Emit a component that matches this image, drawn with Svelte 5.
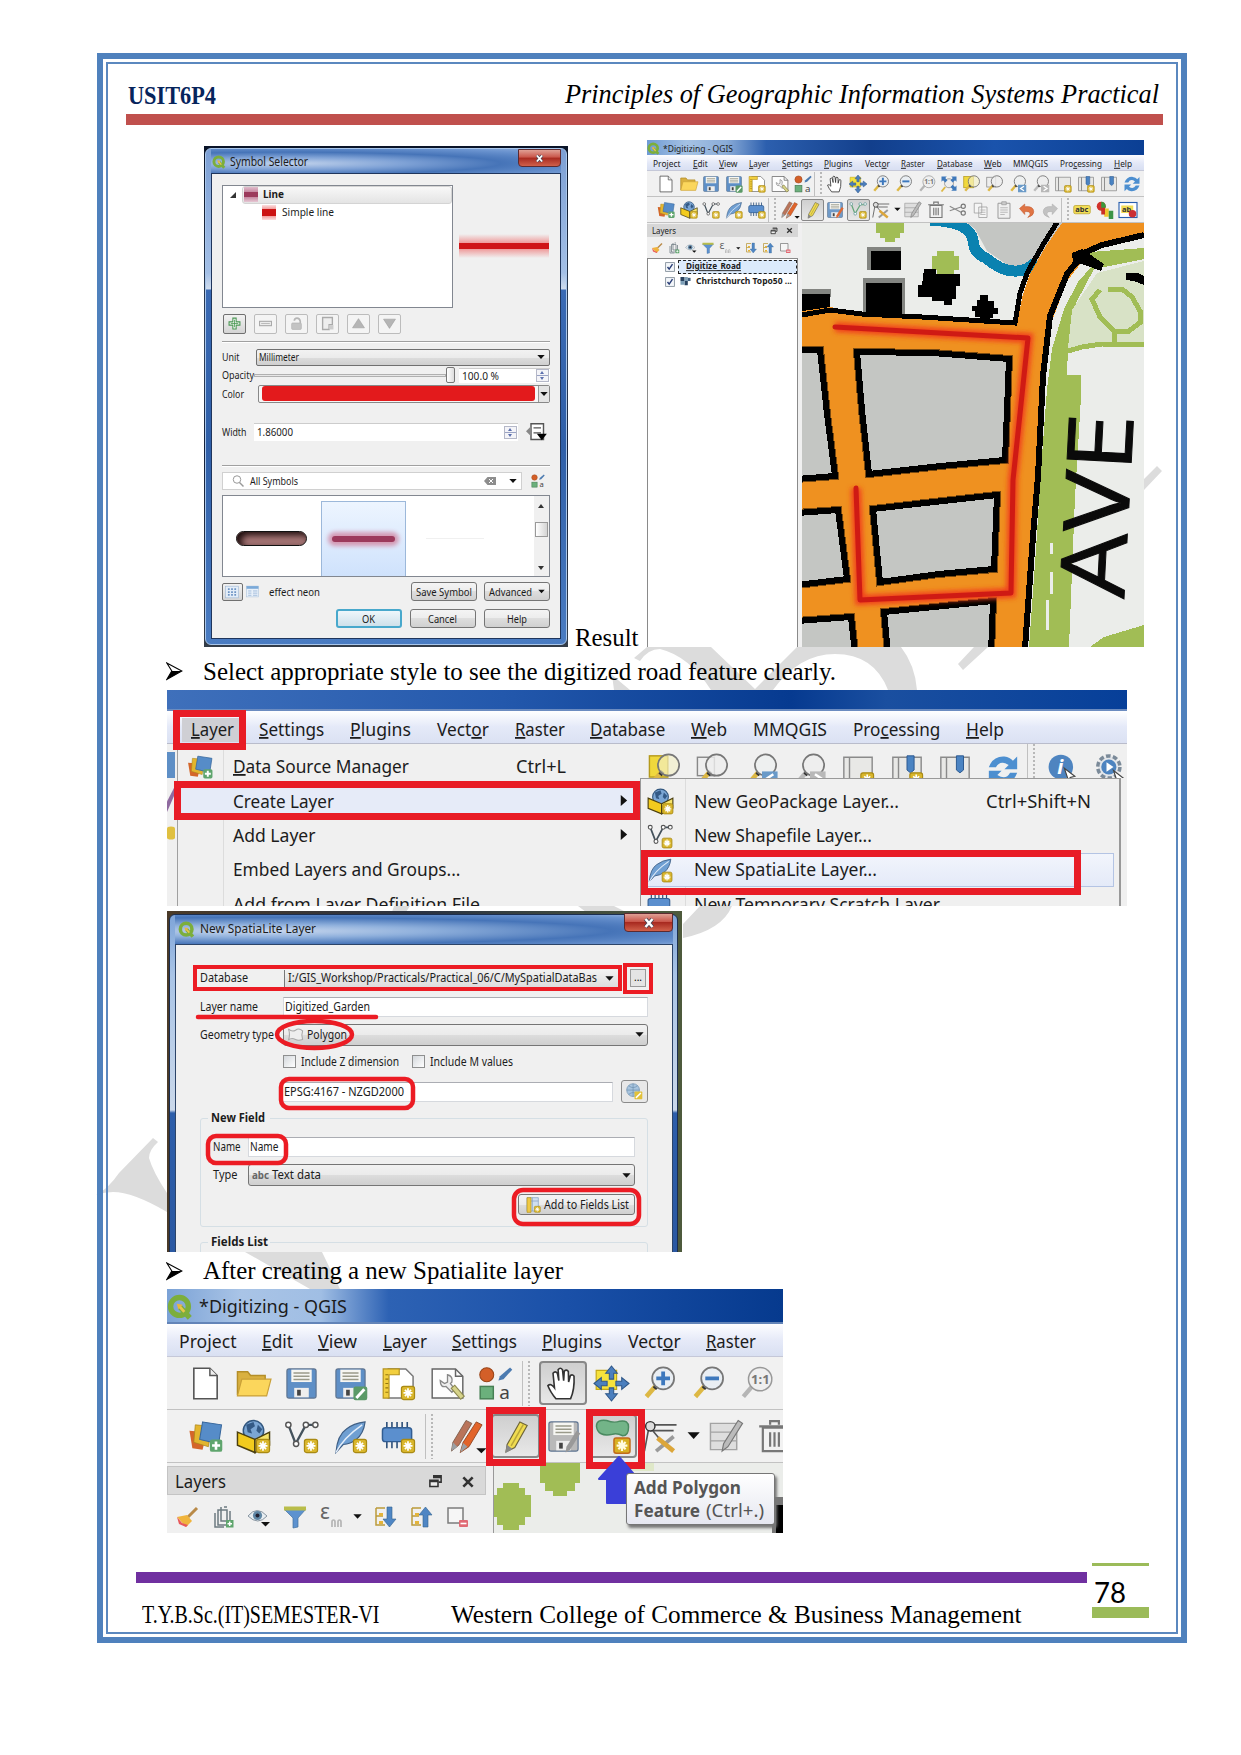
<script>
  const star = '<rect x="14" y="14" width="9" height="9" rx="1.5" fill="#d9b62c" stroke="#a98a14" stroke-width=".8"/><path d="M18.5 15.2v6.6M15.4 18.5h6.2M16.4 16.4l4.2 4.2M20.6 16.4l-4.2 4.2" stroke="#fff" stroke-width="1.2"/>';
  const lens = (f, c) => `<path d="M9 14l-6 7" stroke="${c}" stroke-width="3.2"/><path d="M10.5 13.2l-2 2.3" stroke="#333" stroke-width="3"/><circle cx="14.5" cy="8.5" r="7.5" fill="${f}" stroke="#777" stroke-width="1.2"/>`;
  const sheet = '<path d="M2 3h4v18h-4zM6 3h16v18h-16z" fill="#e8e8e6" stroke="#8a8a8a"/>';
  const floppy = (c) => `<path d="M2 3.5q0-1.5 1.5-1.5h17q1.5 0 1.5 1.5v17q0 1.5-1.5 1.5h-17q-1.5 0-1.5-1.5z" fill="${c}" stroke="#5c7390" stroke-width=".8"/><rect x="5" y="2.5" width="14" height="8.5" fill="#f6f6f2"/><path d="M6.5 4.8h11M6.5 7h11M6.5 9.2h11" stroke="#9a9a8a"/><rect x="7" y="15" width="10" height="6.5" fill="#eee"/><rect x="9" y="16.3" width="2.5" height="4" fill="#444"/>`;
  const icons = {
    q: '<circle cx="11.5" cy="11.5" r="8.2" fill="none" stroke="#7cae3c" stroke-width="5"/><path d="M12 12l9 10" stroke="#7cae3c" stroke-width="5"/><path d="M9 9l5.5 1-4 4z" fill="#eeb63a"/><path d="M12 12l4 4.5" stroke="#e8c54a" stroke-width="2.5"/>',
    new: '<path d="M4 1.5h11l5 5v16h-16z" fill="#fff" stroke="#555" stroke-width="1.1"/><path d="M15 1.5v5h5" fill="#eee" stroke="#555"/>',
    open: '<path d="M1 20v-16h7l2 2.5h10v4" fill="#d9b040" stroke="#b48e28"/><path d="M1 20.5l3-11.5h20l-3 11.5z" fill="#fbd65c" stroke="#c9a038" stroke-width=".8"/>',
    save: floppy('#5e8fc6'),
    saveas: floppy('#5e8fc6') + '<rect x="14" y="14" width="9.5" height="9.5" rx="1.5" fill="#5b9a67"/><path d="M16 22l5.5-6" stroke="#fff" stroke-width="2"/>',
    layout: '<path d="M5 2h12l5 5v15h-17z" fill="#fff" stroke="#777"/><path d="M1.5 2h11v4h-7v16h-4z" fill="#f2cf3e" stroke="#b4921c" stroke-width=".8"/><path d="M3 6h2M3 9h2M3 12h2M3 15h2M3 18h2" stroke="#94750c" stroke-width=".8"/>' + star,
    wrench: '<path d="M1.5 2h16l5 5v15h-21z" fill="#fdfdfd" stroke="#666"/><path d="M17.5 2v5h5" stroke="#666"/><path d="M12 6q4 1 3 5l-1 1 3 4-2 2-4-4q-4 1-4-4l3 2 2-1v-2z" fill="#eee" stroke="#888" stroke-width=".9"/><path d="M15.500 14l7 8" stroke="#8c8850" stroke-width="4"/><path d="M16 14.500l6 7" stroke="#d6d38a" stroke-width="2.500"/>',
    style: '<circle cx="6" cy="6" r="4.8" fill="#d35f28" stroke="#9a4417" stroke-width=".7"/><path d="M14 10l1-3 7-6 1.5 1.5-6 6.5z" fill="#4c7bb0"/><rect x="1.5" y="14" width="9" height="8.5" fill="#6bb07c" stroke="#477f54"/><text x="14.5" y="22.5" font-size="13" fill="#444">a</text>',
    hand: '<path d="M7.5 22.5q-4-5-5.5-9 2-2 4.5 1.5l-1-10q1.5-2 3 0l1 5-.5-7.5q1.5-2 3 0l.8 7.5.4-6.5q1.6-1.5 2.8.3l.2 7.2 1.2-4.5q1.6-1 2.5.5.5 9-2.4 15.5z" fill="#fff" stroke="#333" stroke-width="1.1"/>',
    pan: '<path d="M1.5 3h14v13h-14z" fill="#f6e23c" stroke="#c5a916" stroke-width=".8"/><path d="M12 0l4 5h-2.5v4h-3v-4h-2.5zM12 24l4-5h-2.5v-4h-3v4h-2.5zM0 12l5-4v2.5h4v3h-4v2.5zM24 12l-5-4v2.5h-4v3h4v2.5z" fill="#4b7fbe" stroke="#2f5788" stroke-width=".7"/>',
    zin: lens('#e9eef3', '#ddb844') + '<path d="M14.5 3.8v9.4M9.8 8.5h9.4" stroke="#3d78bd" stroke-width="2.6"/>',
    zout: lens('#e9eef3', '#ddb844') + '<path d="M9.8 8.5h9.4" stroke="#3d78bd" stroke-width="2.6"/>',
    z11: '<path d="M9 14l-6 7" stroke="#b5b5b5" stroke-width="3"/><circle cx="14.5" cy="9" r="8" fill="#efefef" stroke="#999"/><text x="8.3" y="12.5" font-size="9" font-weight="700" fill="#777">1:1</text>',
    zfull: '<path d="M7 16l-5 6" stroke="#ddb844" stroke-width="2.5"/><circle cx="12" cy="11" r="6" fill="#eee" stroke="#888"/><path d="M2 2h7l-2 2 3 3-3 3-3-3-2 2zM22 2h-7l2 2-3 3 3 3 3-3 2 2zM22 21v-7l-2 2-3-3-3 3 3 3-2 2z" fill="#3f79bb"/>',
    zsel: '<rect x="1" y="2" width="13" height="15" fill="#f0d83c" stroke="#b59a1c"/>' + lens('#f3f0c8aa', '#ddb844'),
    zlay: '<rect x="1" y="3" width="12" height="13" fill="#eee" stroke="#888"/>' + lens('#eeeeeecc', '#ddb844'),
    zlast: lens('#eef0f0', '#ddb844') + '<rect x="12" y="13" width="11" height="10" fill="#6a9ac8"/><path d="M20 15l-4.5 3 4.5 3" stroke="#fff" stroke-width="1.8" fill="none"/>',
    znext: lens('#eeeeee', '#bbb') + '<rect x="12" y="13" width="11" height="10" fill="#b8b8b8"/><path d="M15.5 15l4.5 3-4.5 3" stroke="#fff" stroke-width="1.8" fill="none"/>',
    nmap: sheet + star,
    nbook: sheet + '<path d="M12 2h5v10l-2.5 2-2.5-2z" fill="#4a83c2" stroke="#2d5a91" stroke-width=".7"/>' + star,
    book: sheet + '<path d="M13 2h5v10l-2.5 2-2.5-2z" fill="#4a83c2" stroke="#2d5a91" stroke-width=".7"/>',
    refresh: '<path d="M2 10q3-8 11-7.5 4 .5 6 3l3-3v9h-9l3-3q-6-4-9 1.5zM22 14q-3 8-11 7.5-4-.5-6-3l-3 3v-9h9l-3 3q6 4 9-1.5z" fill="#4d8fd0"/>',
    dsm: '<path d="M1 8l12 1-3 12-7-1z" fill="#d4662a"/><path d="M5 4l11 1-2 14-10-3z" fill="#e3b52e" stroke="#a9841b" stroke-width=".5"/><path d="M10 2l13 2-2 13-13-3z" fill="#568cc8" stroke="#38679c" stroke-width=".7"/><rect x="15" y="14" width="8.5" height="8.5" rx="1.5" fill="#5fa56d"/><path d="M19.2 15.5v5.5M16.5 18.2h5.5" stroke="#fff" stroke-width="1.8"/>',
    gpkg: '<circle cx="12" cy="8" r="7" fill="#7ba6d4" stroke="#32577f"/><path d="M7 4l5-2 1 3-3 2 1 3-3-1zM15 4l3 3-2 3-2-2z" fill="#345a86"/><path d="M1 9l12 5v9l-12-5z" fill="#f2cb1e" stroke="#4c4010"/><path d="M13 14l10-5v9l-10 5z" fill="#f7e46a" stroke="#4c4010"/>' + star,
    shp: '<path d="M3 4l5 13 7-13h6" fill="none" stroke="#44525c" stroke-width="1.6"/><g fill="#fff" stroke="#555"><circle cx="3" cy="4" r="1.8"/><circle cx="8.3" cy="17" r="1.8"/><circle cx="15" cy="4" r="1.8"/><circle cx="21.5" cy="4" r="1.8"/></g>' + star,
    lite: '<path d="M2 23q1-12 7-16 5-4 13-5-1 8-6 12-4 3-9 3.500z" fill="#6f9fd2" stroke="#3f5f85" stroke-width=".8"/><path d="M2 23q5-10 18-19" stroke="#e4eefa" stroke-width="1" fill="none"/>' + star,
    mem: '<path d="M4 2v18M7.5 2v18M11 2v18M14.500 2v18M18 2v18" stroke="#2e5079" stroke-width="1.1"/><rect x="1" y="6" width="20" height="9.5" rx="2" fill="#5b8fce" stroke="#315d92"/>' + star,
    pencils: '<path d="M11 1l4 2-9 15-5 4 1-6z" fill="#b9745a" stroke="#7b5a48" stroke-width=".6"/><path d="M18 2l4 2-9 15-6 4 2-7z" fill="#e2642a" stroke="#8f4420" stroke-width=".6"/><path d="M2 16l-1 6 4-3zM9 16.5l-2 6.5 5-4z" fill="#9ba0a4"/><path d="M18 20h7l-3.500 3.500z" fill="#111"/>',
    pencil: '<path d="M15 2l5 2.500-8.500 15-6 3 .8-5z" fill="#f0dc50" stroke="#6d6438" stroke-width=".8"/><path d="M17.500 3.500l-8.500 15" stroke="#b9a63a"/><path d="M6 17.500l-1 6 5-3z" fill="#888"/>',
    saveed: floppy('#6f9ac8') + '<path d="M21 8l2.5 2-7 11-3 2 .5-4z" fill="#de6a35"/>',
    savegr: floppy('#b9b9b9') + '<path d="M21 8l2.5 2-7 11-3 2 .5-4z" fill="#999"/>',
    line: '<path d="M3 4l5 13 7-12h6" fill="none" stroke="#62a578" stroke-width="1.6"/><g fill="#fff" stroke="#699"><circle cx="3" cy="4" r="1.8"/><circle cx="8.3" cy="17" r="1.8"/><circle cx="15" cy="4" r="1.8"/><circle cx="21.5" cy="4" r="1.8"/></g>' + star,
    poly: '<path d="M1 5q0-5 7-4 5 2 9 .5 6-1 6 4 0 6-4 6-4-2-7-1-10 2-11-5.500z" fill="#73b488" stroke="#4a8a60"/><rect x="13" y="13" width="11" height="10.5" rx="1.5" fill="#d8b022" stroke="#c06a1a"/><path d="M18.5 14.5v7.500M14.8 18.2h7.400M16 15.8l5 5M21 15.8l-5 5" stroke="#fffbe0" stroke-width="1.5"/>',
    vert: '<path d="M1 22l3-16M5 4h18M5 8h16M5 6l10 12" fill="none" stroke="#555" stroke-width="1.1"/><circle cx="5" cy="5" r="3.2" fill="#ddd" stroke="#333"/><path d="M9 22l12-10" stroke="#9a9a9a" stroke-width="2.6"/><path d="M10 13l11 9" stroke="#dca63a" stroke-width="3.2"/>',
    multi: '<path d="M1 3h18v18h-18zM1 9h18M1 15h18" fill="#dedede" stroke="#a3a3a3"/><path d="M20 1l3 2-10 16-4 3 1-5z" fill="#bbb" stroke="#777" stroke-width=".8"/>',
    trash: '<path d="M4 6h16v16h-16z" fill="#f2f2f2" stroke="#777" stroke-width="1.5"/><path d="M1.5 5h21M9 4v-2.500h6v2.500M9 9v10M12 9v10M15 9v10" stroke="#777" stroke-width="1.5" fill="none"/>',
    cut: '<path d="M1 7l15 8M1 13l15-5" stroke="#8a8a8a" stroke-width="1.4"/><g fill="none" stroke="#777" stroke-width="1.5"><circle cx="19" cy="7" r="2.8"/><circle cx="19" cy="16" r="2.8"/></g>',
    copy: '<path d="M3 3h10v13h-10zM9 8h11v14h-11z" fill="#f5f5f5" stroke="#999"/><path d="M11 12h7M11 15h7M11 18h7" stroke="#aaa"/>',
    paste: '<path d="M4 3h16v20h-16z" fill="#f0f0f0" stroke="#999" stroke-width="1.3"/><path d="M9 1h6v4h-6z" fill="#ccc" stroke="#999"/><path d="M7 9h10M7 12h10M7 15h10M7 18h6" stroke="#aaa"/>',
    undo: '<path d="M2 10l7-6v3.500q12-1 12 7 0 5-8 7.500 4-4 3-6-1-2.500-7-2v4z" fill="#e07444" stroke="#c0562a" stroke-width=".7"/>',
    redo: '<path d="M22 10l-7-6v3.500q-12-1-12 7 0 5 8 7.500-4-4-3-6 1-2.500 7-2v4z" fill="#c2c2c2" stroke="#aaa" stroke-width=".7"/>',
    abc: '<rect x="1" y="6" width="22" height="11" rx="2" fill="#f2dd55" stroke="#baa32e"/><text x="3" y="15" font-size="10" font-weight="700" fill="#333">abc</text>',
    dia: '<circle cx="7" cy="7" r="6" fill="#d2322c"/><path d="M7 1a6 6 0 010 12z" fill="#3a9a3c"/><rect x="11" y="10" width="6" height="11" fill="#f0c62e"/><rect x="7" y="9" width="5" height="9" fill="#cc2f24"/><rect x="17" y="13" width="6" height="11" fill="#3c9446"/>',
    abp: '<rect x="0" y="2" width="24" height="20" fill="#fff" stroke="#2a5fae" stroke-width="1.5"/><rect x="3" y="6" width="16" height="10" fill="#f2dd55"/><text x="4" y="14.5" font-size="10" font-weight="700" fill="#333">ab</text><circle cx="18" cy="17" r="5" fill="#cc2f34"/>',
    broom: '<path d="M22 3l-9 9" stroke="#b98a48" stroke-width="3"/><path d="M2 12l10-2 5 6-6 6z" fill="#f0b43c"/><path d="M2 12l5 6 6 2-2 2-7-3z" fill="#e8585a"/>',
    group: '<path d="M7 5h9v15h-9zM4 8v14h9M10 2v14h9v-10M13 2h3" fill="none" stroke="#6c7a80" stroke-width="1.5"/><rect x="15" y="15" width="7.5" height="7.5" fill="#5fa56d"/><path d="M18.7 16.5v4.500M16.5 18.7h4.500" stroke="#fff" stroke-width="1.5"/>',
    eye: '<path d="M1 11q9-11 19 0-9 10-19 0z" fill="#e8eef2" stroke="#8794a0"/><circle cx="10.5" cy="10.5" r="4.6" fill="#5f86a4"/><circle cx="10.5" cy="10.5" r="2" fill="#223"/><path d="M14 17h9l-4.5 4.500z" fill="#111"/>',
    filter: '<path d="M1 4h22l-8 9v9l-5 1v-10z" fill="#5d92cf" stroke="#42719f" stroke-width=".7"/><path d="M1 1.5h22v4h-22z" fill="#b9bd4a"/>',
    eps: '<text x="1" y="14" font-size="21" fill="#666">ε</text><path d="M13 22v-5q0-2 1.500-2t1.500 2v5M19 22v-5q0-2 1.500-2t1.500 2v5" fill="none" stroke="#b5b5b5" stroke-width="1.7"/>',
    exp: '<path d="M3 3h9M3 3v17h9M3 11h7" stroke="#bb9a3a" stroke-width="1.5" fill="none"/><path d="M6 8h4v3h-4zM6 16h4v3h-4z" fill="#e4b43a"/><path d="M14 2h5v12h4l-6.5 8-6.5-8h4z" fill="#4f86c4" stroke="#32628f" stroke-width=".6"/>',
    col: '<path d="M3 3h9M3 3v17h9M3 11h7" stroke="#bb9a3a" stroke-width="1.5" fill="none"/><path d="M6 8h4v3h-4zM6 16h4v3h-4z" fill="#e4b43a"/><path d="M14 22h5v-12h4l-6.5-8-6.5 8h4z" fill="#4f86c4" stroke="#32628f" stroke-width=".6"/>',
    rem: '<path d="M3 3h15v15h-15z" fill="#f6f6f6" stroke="#7c7c7c" stroke-width="1.5"/><rect x="14" y="15" width="9" height="7" rx="1" fill="#e06a74"/><path d="M15.5 18.5h6" stroke="#fff" stroke-width="1.6"/>',
    info: '<circle cx="11" cy="12" r="10.5" fill="#4e84c0"/><text x="8" y="18" font-size="17" font-weight="700" font-style="italic" fill="#fff">i</text><path d="M14 13l9 7-4 1-1 4z" fill="#fff" stroke="#444"/>',
    gear: '<circle cx="11" cy="12" r="9.5" fill="#e3e6ea" stroke="#7b8a99" stroke-width="3" stroke-dasharray="4 2"/><circle cx="11" cy="12" r="6.5" fill="#4e84c0"/><path d="M9 8l6 4-6 4z" fill="#fff"/><path d="M15 15l9 7-4 1-1 4z" fill="#fff" stroke="#444"/>',
    float: '<path d="M8 3h13v10h-4M8 5.5h13" fill="none" stroke="#333" stroke-width="2.5"/><path d="M3 10h13v10h-13zM3 12h13" fill="#eee" stroke="#333" stroke-width="2.5"/>',
    x: '<path d="M4 4l16 16M20 4l-16 16" stroke="#333" stroke-width="4.5"/>',
    xw: '<path d="M5 4l14 16M19 4l-14 16" stroke="#445" stroke-width="8"/><path d="M5 4l14 16M19 4l-14 16" stroke="#fff" stroke-width="5"/>',
    down: '<path d="M1 6h22l-11 12z" fill="#111"/>',
    right: '<path d="M6 0l14 12-14 12z" fill="#111"/>',
    plus: '<path d="M9 2h6v7h7v6h-7v7h-6v-7h-7v-6h7z" fill="#fff" stroke="#4a9653" stroke-width="2"/><path d="M12 5v14M5 12h14" stroke="#4a9653" stroke-width="1.5"/>',
    minus: '<rect x="1" y="8" width="22" height="8" fill="#eee" stroke="#aaa" stroke-width="2"/><path d="M4 12h16" stroke="#bbb" stroke-width="2"/>',
    lock: '<rect x="3" y="11" width="18" height="12" rx="2" fill="#c3c3c3" stroke="#aaa"/><path d="M8 7q0-5 5-5t6 6v3" fill="none" stroke="#b5b5b5" stroke-width="3"/>',
    dup: '<path d="M3 1h18v13h-6v9h-12z" fill="#eee" stroke="#aaa" stroke-width="2.5"/><rect x="15" y="15" width="8" height="8" fill="#ccc"/>',
    up: '<path d="M12 3l11 17h-22z" fill="#b5b5b5" stroke="#999"/>',
    dn: '<path d="M12 21l11-17h-22z" fill="#b5b5b5" stroke="#999"/>',
    mag: '<circle cx="10" cy="9" r="7.5" fill="none" stroke="#999" stroke-width="2"/><path d="M15 15l8 8" stroke="#999" stroke-width="3"/>',
    clear: '<path d="M0 12l7-8h17v16h-17z" fill="#8d8d8d"/><path d="M10 8l8 8M18 8l-8 8" stroke="#fff" stroke-width="2"/>',
    grid: '<rect x="1" y="2" width="22" height="20" fill="#e3edf8" stroke="#9db6d4"/><path d="M5 7h14M5 12h14M5 17h14" stroke="#6e94c4" stroke-width="3" stroke-dasharray="3 2.5"/>',
    table: '<rect x="1" y="2" width="22" height="20" fill="#e8f0f9" stroke="#a9c0da"/><path d="M1 4.5h22" stroke="#7ba9d8" stroke-width="5"/><path d="M4 11h6M13 11h8M4 15h6M13 15h8M4 19h6M13 19h8" stroke="#96b4d6" stroke-width="1.5"/>',
    over: '<path d="M6 2h15v19h-15zM9 7h9M9 13h9" fill="#fff" stroke="#555" stroke-width="1.7"/><path d="M6 5l-6 6 6 6z" fill="#888"/><path d="M13 14h12l-6 8z" fill="#000"/>',
    globe: '<circle cx="10" cy="10" r="9" fill="#a8c4de" stroke="#6f90b0"/><path d="M1 10h18M10 1v18M4 4q6 5 12 0M4 16q6-5 12 0" stroke="#6f90b0" fill="none"/><rect x="12" y="12" width="11" height="11" rx="1" fill="#e2c13a"/><path d="M14 21l7-7" stroke="#fff" stroke-width="2"/>',
    shape: '<path d="M2 4q5 5 10 2 5-4 10 1-2 5 0 12-6 2-10 0-6-3-10 1 3-8 0-16z" fill="#eee" stroke="#aaa" stroke-width="1.5"/>',
    field: '<path d="M3 1h17v20h-17z" fill="#cfdff0" stroke="#7f9cc0"/><path d="M3 6h17M11 1v20" stroke="#7f9cc0"/><path d="M3 1h6v22h-6z" fill="#efc945" stroke="#b4921c"/>' + star,
    check: '<rect x="1.5" y="1.5" width="21" height="21" fill="#f4f7fa" stroke="#7e8a96" stroke-width="2"/><path d="M6 12l4 5 8-12" fill="none" stroke="#2b3f77" stroke-width="3.5"/>',
    raster: '<path d="M1 2h9v9h-9zM10 11h7v9h-7z" fill="#27415f"/><path d="M10 2h7v9h-7zM1 11h9v8h-9z" fill="#7ea0b8"/><path d="M17 4h6v7h-6z" fill="#3f6080"/>'
  };

  const menu = ['Project', '~Edit', '~View', '~Layer', '~Settings', '~Plugins', 'Vect~or', '~Raster', '~Database', '~Web', 'MMQGIS', 'Pro~cessing', '~Help'];
  const menuB = [27.5, 14.7, 18.5, 20.7, 30.7, 28.4, 25, 23.7, 35.4, 17.7, 35, 42, 18];
  const menuC = [43, 65.3, 61, 52, 50, 75.3, 36, 74, 87.3, 38];
  const menuE = [57.5, 31, 39, 44, 65, 60, 52.7, 50];

  const tb1 = ['new', 'open', 'save', 'saveas', 'layout', 'wrench', 'style', '|', 'hand', 'pan', 'zin', 'zout', 'z11', 'zfull', 'zsel', 'zlay', 'zlast', 'znext', 'nmap', 'nbook', 'book', 'refresh'];
  const tb2 = ['dsm', 'gpkg', 'shp', 'lite', 'mem', '|', 'pencils', '!pencil', 'saveed', '!line', 'vert', '▾', 'multi', 'trash', 'cut', 'copy', 'paste', 'undo', 'redo', '|', 'abc', 'dia', 'abp'];
  const tb3 = ['new', 'open', 'save', 'saveas', 'layout', 'wrench', 'style', '|', '!hand', 'pan', 'zin', 'zout', 'z11'];
  const tb4 = ['dsm', 'gpkg', 'shp', 'lite', 'mem', '|', 'pencils', '!pencil', 'savegr', '!poly', 'vert', '▾', 'multi', 'trash'];
  const tbL = ['broom', 'group', 'eye', 'filter', 'eps', '▾', 'exp', 'col', 'rem'];
  const strip = ['zsel', 'zlay', 'zlast', 'znext', 'nmap', 'nbook', 'book', 'refresh'];
</script>

{#snippet t(s, w, fs, cls = '')}
  <svg class="t {cls}" width={w} height={Math.round(fs * 1.36)}><text x="0" y={fs} font-size={fs} textLength={w} lengthAdjust="spacingAndGlyphs">{#each s.split('~') as part, i}{#if i === 0}{part}{:else}<tspan class="mn">{part[0]}</tspan>{part.slice(1)}{/if}{/each}</text></svg>
{/snippet}

{#snippet icon(name, size)}
  <svg class="ic" width={size} height={size} viewBox="0 0 24 24" fill="none">{@html icons[name]}</svg>
{/snippet}

{#snippet toolbar(items, size)}
  {#each items as it}
    {#if it === '|'}
      <span class="sep"></span>
    {:else if it === '▾'}
      <span class="drop">{@render icon('down', size * 0.38)}</span>
    {:else if it[0] === '!'}
      <span class="cell on">{@render icon(it.slice(1), size)}</span>
    {:else}
      <span class="cell">{@render icon(it, size)}</span>
    {/if}
  {/each}
{/snippet}

{#snippet bullet()}
  <svg class="bullet" width="17" height="19" viewBox="0 0 17 19"><path d="M.8 1l15 8-15 8.5 5-8.5z" fill="#fff" stroke="#000" stroke-width="1.1" /><path d="M5.8 9h10l-15 8.5z" /></svg>
{/snippet}

<div class="page">
  <svg class="wm" width="1241" height="1755">
    <path d="M96 1195q12-6 23-22l34-35 5 4q-9 8-9 16 4 14 18 35v19q-34-20-54-20-8 0-17 3zM245 1252h77l18 37h-30z" />
    <path d="M634 658l13-11h64l44 42 42-42h104q14 18 16 43h-29q-14-36-53-36-36 0-62 36h-62q-22-34-51-41-12 0-20 12zM612 675l18 15h-16zM958 664l5 6 25-23h-14zM1144 479l13-13 5 5-18 19zM700 906h32q-10 24-49 32v-14zM394 906h16l-4 6h-14zM578 906h36l12 6h-40z" />
  </svg>
  <div class="frame">
    <div class="inner">
      <header>
        {@render t('USIT6P4', 88, 25, 'code')}
        {@render t('Principles of Geographic Information Systems Practical', 594, 27, 'ital')}
      </header>

      <div class="pair">
        <section class="symsel">
          <div class="glass">
            <div class="title">{@render icon('q', 14)}{@render t('Symbol Selector', 78, 12)}<span class="close">{@render icon('xw', 9)}</span></div>
            <div class="client">
              <div class="top">
                <div class="tree">
                  <div class="r1"><svg width="6" height="6"><path d="M6 0v6h-6z" fill="#333" /></svg><div class="sel"><i class="sw plum"></i>{@render t('Line', 21, 11, 'b')}</div></div>
                  <div class="r2"><i class="sw red"></i>{@render t('Simple line', 52, 10.5)}</div>
                </div>
                <div class="prev"></div>
              </div>
              <div class="btns">
                {#each ['plus', 'minus', 'lock', 'dup', 'up', 'dn'] as b, i}
                  <span class="sb" class:live={i === 0}>{@render icon(b, 13)}</span>
                {/each}
              </div>
              <hr />
              <div class="f unit">{@render t('Unit', 17.5, 10.5)}<div class="combo">{@render t('Millimeter', 40, 10.5)}{@render icon('down', 8)}</div></div>
              <div class="f opac">{@render t('Opacity', 32, 10.5)}<i class="track"></i><i class="knob"></i><div class="spin">{@render t('100.0 %', 37, 10.5)}<i class="ud"></i></div></div>
              <div class="f colr">{@render t('Color', 22, 10.5)}<div class="cbox"><i></i><b>{@render icon('down', 8)}</b></div></div>
              <div class="f wid">{@render t('Width', 24.5, 10.5)}<div class="spin">{@render t('1.86000', 36, 10.5)}<i class="ud"></i></div>{@render icon('over', 20)}</div>
              <hr class="h2" />
              <div class="f srch"><div class="sbox">{@render icon('mag', 12)}{@render t('All Symbols', 48, 10.5)}<em></em>{@render icon('clear', 12)}<em class="g"></em>{@render icon('down', 8)}</div>{@render icon('style', 14)}</div>
              <div class="gallery">
                <div class="cellg first"><i class="pill"></i></div>
                <div class="cellg pick"><i class="neon"></i></div>
                <div class="cellg wide"><i class="faint"></i></div>
                <div class="sbar"><svg width="6" height="4"><path d="M0 4l3-4 3 4z" fill="#333" /></svg><i></i><svg width="6" height="4"><path d="M0 0l3 4 3-4z" fill="#333" /></svg></div>
              </div>
              <div class="f foot"><span class="sb live">{@render icon('grid', 14)}</span>{@render icon('table', 13)}{@render t('effect neon', 51, 10.5)}<em></em><span class="bt">{@render t('Save Symbol', 56, 10.5)}</span><span class="bt">{@render t('Advanced', 43, 10.5)}{@render icon('down', 7)}</span></div>
              <div class="f acts"><span class="bt ok">{@render t('OK', 13, 10.5)}</span><span class="bt">{@render t('Cancel', 29, 10.5)}</span><span class="bt">{@render t('Help', 20, 10.5)}</span></div>
            </div>
          </div>
        </section>

        <div class="result">{@render t('Result', 63.5, 24.8, 'serif')}</div>

        <section class="qgis">
          <div class="bar">{@render icon('q', 13)}{@render t('*Digitizing - QGIS', 70, 9.8)}</div>
          <nav>{#each menu as m, i}{@render t(m, menuB[i], 9.8)}{/each}</nav>
          <div class="tb">{@render toolbar(tb1, 18)}</div>
          <div class="tb two">{@render toolbar(tb2, 18)}</div>
          <div class="work">
            <div class="panel">
              <div class="ph">{@render t('Layers', 24, 9.8)}<em></em>{@render icon('float', 8)}{@render icon('x', 7)}</div>
              <div class="pt">{@render toolbar(tbL, 12)}</div>
              <div class="layers">
                <div class="lr">{@render icon('check', 10)}<div class="pickrow">{@render t('Digitize_Road', 55, 9.2, 'b und')}</div></div>
                <div class="lr second">{@render icon('check', 10)}{@render icon('raster', 11)}{@render t('Christchurch Topo50 ...', 96, 9.2, 'b')}</div>
              </div>
            </div>
            <svg class="map" width="342" height="424" viewBox="0 0 342 424">
              <defs><filter id="glow" x="-20%" y="-20%" width="140%" height="140%"><feGaussianBlur stdDeviation="2.5" /></filter></defs>
              <rect width="342" height="424" fill="#ebedea" />
              <path d="M165 0h100l-28 46-20 4-32-22-12-22z" fill="#c4c6c3" />
              <g shape-rendering="crispEdges">
                <path d="M128-3q40 2 43 20 1 14 13 18 16 14 31 13 10 0 20-10" fill="none" stroke="#0a82b0" stroke-width="11" />
                <path d="M74 0h28v10h-4v5h-5v4h-10v-4h-5v-5h-4zM135 28h17v5h5v14h-5v6h-17v-6h-5v-14h5z" fill="#a1bd55" />
                <path d="M65 24h34v23h-34zM61 55h42v36h-42zM0 66h29v8h-29z" fill="#838581" />
                <path d="M69 28h30v19h-30zM64 60h36v34h-36zM0 71h28v20h-28zM122 46h12v5h24v12h-4v13h-4v6h-8v-4h-12v-4h-14v-12h4zM178 72h8v6h6v7h4v6h-5v4h-3v8h-10v-9h-5v-6h-3v-5h5v-6h3z" fill="#000" />
                <path d="M0 88l28-4 30 6 60 3 97 8 5-26 8-24 16-28 16-23h82v12l-52 14-25 32-15 40-8 60-5 80-5 80-8 106h-224z" fill="#ef9120" />
                <path d="M0 92l28-5 32 4 60 3 93 6 5-30 8-22 16-28 14-22" fill="none" stroke="#000" stroke-width="5" />
                <path d="M342 25l-54 4 2 14-14 16-14 27-12 40-5 40-6 80-5 80-7 98h40l6-150 6-100v-22h-14l1-28 8-44 18-34 50-10z" fill="#a1bd55" />
                <path d="M342 12l-42 10-18 8-17 21-17 42-7 60-5 100-5 60-8 112" fill="none" stroke="#000" stroke-width="6" />
                <path d="M295 50l47-12v84l-76 3 4-38z" fill="#d8e2c6" />
                <path d="M266 128l14-4 20-3 42 1M312 120v-12h15l13-10M312 108l-14-14-8-18 8-9M306 66h14l10 8 8 14v12" fill="none" stroke="#a1bd55" stroke-width="5" />
                <path d="M270 30l10-4 22 15-3 7-16-6-12-3zM324 50h12l6 3v9l-10-4-8-1z" />
                <path d="M249 320v11M249 349v22M245 377v30" stroke="#ebedea" stroke-width="3" />
                <path d="M288 424l14-10 40-12v22z" fill="#a1bd55" />
                <g fill="#c4c6c3" stroke="#7a4a10" stroke-width="8">
                  <path d="M55 129l76 1 76 6-4 101-64 6-72 8-7-64z" />
                  <path d="M-5 127h23l7 64 8 62-38 3z" />
                  <path d="M71 286l52-6 72-8-3 74-55 5-59 8z" />
                  <path d="M-5 290l41-3 9 69-50 6z" />
                  <path d="M82 389l50-5 59-6-2 52h-103z" />
                  <path d="M-5 398l54-4 4 36h-58z" />
                </g>
                <g fill="#c4c6c3" stroke="#000" stroke-width="6">
                  <path d="M55 129l76 1 76 6-4 101-64 6-72 8-7-64z" />
                  <path d="M-5 127h23l7 64 8 62-38 3z" />
                  <path d="M71 286l52-6 72-8-3 74-55 5-59 8z" />
                  <path d="M-5 290l41-3 9 69-50 6z" />
                  <path d="M82 389l50-5 59-6-2 52h-103z" />
                  <path d="M-5 398l54-4 4 36h-58z" />
                </g>
              </g>
              <text x="0" y="0" class="ave" transform="translate(322 376) rotate(-87)" textLength="184" lengthAdjust="spacingAndGlyphs" font-size="90">AVE</text>
              <path d="M33 104l193 11-15 142-2 113-151 7-4-112" fill="none" stroke="#f0401c" stroke-width="10" filter="url(#glow)" />
              <path d="M33 104l193 11-15 142-2 113-151 7-4-112" fill="none" stroke="#cf1a14" stroke-width="5" stroke-linecap="round" stroke-linejoin="round" />
            </svg>
          </div>
        </section>
      </div>

      <div class="item">{@render bullet()}{@render t('Select appropriate style to see the digitized road feature clearly.', 633, 24.8, 'serif')}</div>

      <section class="menus">
        <div class="blue"></div>
        <nav>{#each menu.slice(3) as m, i}<span class="mi" class:hot={i === 0}>{@render t(m, menuC[i], 18)}</span>{/each}</nav>
        <div class="below">
          <div class="edge"><i class="e1"></i><i class="e2"></i><i class="e3"></i></div>
          <div class="dropm">
            <div class="mr"><span class="mic">{@render icon('dsm', 26)}</span>{@render t('~Data Source Manager', 176, 18)}<span class="key">{@render t('Ctrl+L', 50, 18)}</span></div>
            <div class="mr cre"><span class="mic"></span>{@render t('Create Layer', 101, 18)}<span class="arr">{@render icon('right', 11)}</span></div>
            <div class="mr"><span class="mic"></span>{@render t('Add Layer', 82.5, 18)}<span class="arr">{@render icon('right', 11)}</span></div>
            <div class="mr"><span class="mic"></span>{@render t('Embed Layers and Groups...', 227.5, 18)}</div>
            <div class="mr"><span class="mic"></span>{@render t('Add from Layer Definition File', 247, 18)}</div>
            <div class="mark m2"></div>
          </div>
          <div class="rest">
            <div class="stb">{#each strip as s}<span class="c2">{@render icon(s, 34)}</span>{/each}<span class="sep"></span><span class="c2">{@render icon('info', 28)}</span><span class="c2">{@render icon('gear', 28)}</span></div>
            <div class="subm">
              <div class="mr"><span class="mic">{@render icon('gpkg', 27)}</span>{@render t('New GeoPackage Layer...', 205, 18)}<span class="key">{@render t('Ctrl+Shift+N', 105, 18)}</span></div>
              <div class="mr"><span class="mic">{@render icon('shp', 26)}</span>{@render t('New Shapefile Layer...', 178, 18)}</div>
              <div class="mr hov"><span class="mic">{@render icon('lite', 26)}</span>{@render t('New SpatiaLite Layer...', 183, 18)}</div>
              <div class="mr"><span class="mic">{@render icon('mem', 26)}</span>{@render t('New Temporary Scratch Layer', 246, 18)}</div>
              <div class="mark m3"></div>
            </div>
          </div>
        </div>
        <div class="mark m1"></div>
      </section>

      <section class="dlg">
        <div class="glass2">
          <div class="title">{@render icon('q', 17)}{@render t('New SpatiaLite Layer', 116, 13)}<span class="close">{@render icon('xw', 12)}</span></div>
          <div class="body">
            <div class="g db"><div class="red sq">{@render t('Database', 48, 12)}<div class="cb">{@render t('I:/GIS_Workshop/Practicals/Practical_06/C/MySpatialDataBas', 309, 12)}{@render icon('down', 9)}</div></div><div class="red sq dots"><b>...</b></div></div>
            <div class="g ln"><span class="lab">{@render t('Layer name', 58, 12)}</span><div class="in">{@render t('Digitized_Garden', 85, 12)}</div></div>
            <div class="g gt"><span class="lab">{@render t('Geometry type', 74, 12)}</span><div class="cmb">{@render icon('shape', 17)}{@render t('Polygon', 40, 12)}<em></em>{@render icon('down', 9)}</div></div>
            <div class="g ck"><i class="box"></i>{@render t('Include Z dimension', 98, 12)}<i class="box b2"></i>{@render t('Include M values', 83, 12)}</div>
            <div class="g ep"><div class="in">{@render t('EPSG:4167 - NZGD2000', 120, 12)}</div><span class="gb">{@render icon('globe', 17)}</span></div>
            <div class="grp">
              <div class="cap">{@render t('New Field', 54, 12, 'b')}</div>
              <div class="g nm"><span class="lab2">{@render t('Name', 27.5, 12)}</span><div class="in">{@render t('Name', 28.5, 12)}</div></div>
              <div class="g ty"><span class="lab2">{@render t('Type', 24.5, 12)}</span><div class="cmb">{@render t('abc', 17, 11, 'b dim')}{@render t('Text data', 49, 12)}<em></em>{@render icon('down', 9)}</div></div>
              <div class="add"><span class="bt">{@render icon('field', 16)}{@render t('Add to Fields List', 85, 12)}</span></div>
            </div>
            <div class="grp g2"><div class="cap">{@render t('Fields List', 57, 12, 'b')}</div></div>
          </div>
        </div>
        <svg class="ann" width="515" height="341" viewBox="0 0 515 341">
          <g fill="none" stroke="#ec1c24" stroke-width="4.5">
            <path d="M31 106h178" stroke-linecap="round" />
            <ellipse cx="147.5" cy="123.5" rx="37.5" ry="13.5" />
            <rect x="114" y="168" width="132" height="29" rx="8" />
            <rect x="41" y="225" width="78" height="27" rx="8" />
            <rect x="347" y="279" width="125" height="34" rx="9" />
          </g>
        </svg>
      </section>

      <div class="item last">{@render bullet()}{@render t('After creating a new Spatialite layer', 360, 24.8, 'serif')}</div>

      <section class="dig">
        <div class="bar">{@render icon('q', 26)}{@render t('*Digitizing - QGIS', 148, 18)}</div>
        <nav>{#each menuE as w, i}{@render t(menu[i], w, 18)}{/each}</nav>
        <div class="tb">{@render toolbar(tb3, 35)}</div>
        <div class="tb two">{@render toolbar(tb4, 35)}</div>
        <div class="work">
          <div class="panel">
            <div class="ph">{@render t('Layers', 51, 18)}<em></em>{@render icon('float', 15)}{@render icon('x', 14)}</div>
            <div class="pt">{@render toolbar(tbL, 24)}</div>
          </div>
          <svg class="map" width="289" height="70" shape-rendering="crispEdges">
            <rect width="289" height="70" fill="#ebedea" />
            <path d="M46 0h40v20h-5v8h-8v5h-14v-5h-8v-8h-5zM9 20h16v5h6v7h6v22h-6v8h-6v5h-16v-5h-6v-8h-3v-22h3v-7h6z" fill="#a1bd55" />
            <path d="M130 0h30v8h-30z" fill="#dfe8c8" /><path d="M278 34h11v36h-11z" fill="#777" /><path d="M282 42h7v28h-7z" />
          </svg>
        </div>
        <div class="mark p1"></div>
        <div class="mark p2"></div>
        <svg class="barrow" width="42" height="50" viewBox="0 0 42 50"><path d="M21 1l19 22h-8v24h-23v-24h-8z" fill="#3a3fd8" stroke="#3a3fd8" stroke-width="2" stroke-linejoin="round" /></svg>
        <div class="tip">{@render t('Add Polygon', 107, 18, 'b')}<div class="tl">{@render t('Feature', 66, 18, 'b')}{@render t('(Ctrl+.)', 58, 18)}</div></div>
      </section>

      <footer>
        <div class="left">
          <div class="purple"></div>
          <div class="names">{@render t('T.Y.B.Sc.(IT)SEMESTER-VI', 237.5, 25, 'serif')}{@render t('Western College of Commerce & Business Management', 570.5, 25, 'serif')}</div>
        </div>
        <div class="num"><i></i>{@render t('78', 32, 29, 'cal')}<b></b></div>
      </footer>
    </div>
  </div>
</div>

<style>
  :global(body) { background: #fff; }
  .page { width: 1241px; height: 1755px; position: relative; overflow: hidden; font-family: "Noto Sans", "Open Sans", sans-serif; }
  .page * { box-sizing: border-box; }
  .wm { position: absolute; left: 0; top: 0; fill: #dcdcdc; }
  .frame { position: relative; margin: 53px 0 0 97px; width: 1090px; height: 1590px; border: 6px solid #4f81bd; padding: 3px; float: left; }
  .inner { border: 2px solid #5b88bf; height: 100%; }
  .t { display: block; flex: none; overflow: visible; fill: #1c1c1c; font-family: "Noto Sans", "Open Sans", sans-serif; }
  .t.serif, .t.code, .t.ital { font-family: "Liberation Serif", serif; fill: #000; }
  .t.code { font-weight: 700; fill: #06245c; }
  .t.ital { font-style: italic; }
  .t.cal { font-family: Lato, sans-serif; fill: #000; }
  .t.b { font-weight: 700; }
  .t.dim { fill: #666; }
  .t.und, .mn { text-decoration: underline; }
  .ic { display: block; flex: none; font-family: "Noto Sans", sans-serif; overflow: visible; }
  em { flex: 1; }
  i, b { display: block; }

  header { margin: 0 13px 0 18px; height: 61px; padding: 0 4px 1px 2px; border-bottom: 11px solid #c0504d; display: flex; justify-content: space-between; align-items: flex-end; }
  .pair { display: flex; align-items: flex-end; margin: 15px 0 0 96px; height: 507px; }
  .result { margin: 0 9px -8px 6.5px; }
  .item { height: 43px; display: flex; align-items: center; gap: 20px; padding: 6px 0 0 58px; }
  .item.last { height: 37px; padding-top: 1px; }
  .bullet { flex: none; }
  section { flex: none; position: relative; overflow: hidden; }

  .symsel { width: 364px; height: 501px; background: linear-gradient(#0a1428 0 10px, #32435c 40%, #14203a 60%, #333c48); padding: 2px 1.5px 2.5px 1px; }
  .glass { height: 100%; border-radius: 6px; border: 1px solid #a9c6ea; background: linear-gradient(#7c9fd4 0, #a3bfe6 25%, #cfdcee 140px, #3a6ab4 141px, #2f5fa8 60%, #4a7cc2); padding: 0 5px 4px; }
  .glass .title { height: 23.5px; display: flex; align-items: center; gap: 4px; padding: 2px 0 0 1px; background: radial-gradient(ellipse at 22% 60%, #c2d3ec, #7fa2d6 30%, #4674b8 55%, #6a93cf 80%, #8eaedc); }
  .title .close { margin: 0 0 0 auto; align-self: flex-start; }
  .close { display: flex; align-items: center; justify-content: center; background: linear-gradient(#e0a095, #c9564a 45%, #a82a20 50%, #d0604a); border: 1px solid #5c2a30; border-radius: 0 0 4px 4px; }
  .title .close { margin-top: -2px; }
  .glass .close { width: 43px; height: 18px; }
  .client { height: 466px; background: #f0f0f0; border: 1.5px solid #1f355c; padding: 11px 10px 0 9.5px; }
  .top { display: flex; gap: 6px; height: 123px; }
  .tree { width: 231px; border: 1px solid #828790; background: #fff; }
  .r1 { display: flex; align-items: center; height: 18px; padding-left: 7px; gap: 6px; }
  .sel { flex: 1; height: 18px; display: flex; align-items: center; gap: 5px; padding-left: 1px; background: linear-gradient(#f8f8f8, #e4e4e4); border: 1px solid #d4d4d4; border-radius: 3px; }
  .r2 { display: flex; align-items: center; gap: 6px; padding: 1px 0 0 39px; }
  .sw { width: 14px; height: 15px; }
  .plum { background: linear-gradient(#e0bccb, #c98da5 30%, #9c3a5c 32% 68%, #c98da5 70%, #e6c8d4); }
  .sw.red { background: linear-gradient(#fbe0e0, #f29a9a 28%, #cc1414 30% 70%, #f29a9a 72%, #fbe0e0); }
  .prev { width: 90px; height: 24px; margin-top: 49px; background: linear-gradient(#f0f0f000, #ef9c9c 37%, #cf1518 38% 62%, #ef9c9c 63%, #f0f0f000); }
  .btns { display: flex; gap: 8px; margin-top: 6px; padding-left: 1px; }
  .sb { width: 23px; height: 20px; display: flex; align-items: center; justify-content: center; border: 1px solid #bcbcbc; border-radius: 2px; background: #f4f4f4; }
  .sb.live { border-color: #707070; background: linear-gradient(#f2f2f2, #d4d4d4); }
  hr { border: 0; border-top: 1px solid #a0a0a0; border-bottom: 1px solid #fff; margin: 7px 0 0; height: 2px; }
  .f { display: flex; align-items: center; }
  .unit { margin-top: 6px; height: 17px; justify-content: space-between; }
  .combo { width: 294px; height: 17px; display: flex; align-items: center; justify-content: space-between; padding: 0 4px 0 2px; border: 1px solid #707070; border-radius: 2px; background: linear-gradient(#f2f2f2, #ebebeb 50%, #dddddd 50%, #cfcfcf); }
  .opac { height: 17px; margin-top: 1px; }
  .track { width: 192px; height: 3px; border: 1px solid #b0b0b0; background: #e7e7e7; }
  .knob { width: 9px; height: 16px; border: 1px solid #777; border-radius: 2px; background: linear-gradient(90deg, #fff, #ddd); margin-right: 4px; }
  .spin { background: #fff; height: 15px; flex: 1; display: flex; align-items: center; justify-content: space-between; padding: 0 1px 0 3px; border-top: 1px solid #ccc; }
  .ud { width: 13px; height: 13px; border: 1px solid #b5b8c8; background: linear-gradient(#f4f4f8 45%, #9aa3c4 45% 55%, #f4f4f8 55%); display: flex; flex-direction: column; align-items: center; justify-content: space-between; padding: 1px 0; }
  .ud::before { content: ""; border: 2px solid transparent; border-top: 0; border-bottom: 3px solid #5b6fae; }
  .ud::after { content: ""; border: 2px solid transparent; border-bottom: 0; border-top: 3px solid #5b6fae; }
  .colr { height: 18px; margin-top: 1px; justify-content: space-between; }
  .cbox { width: 292px; height: 18px; display: flex; align-items: center; border: 1px solid #888; border-radius: 2px; padding-left: 3px; background: #f6f6f6; }
  .cbox i { flex: 1; height: 15px; background: #e31a1c; border-radius: 3px; }
  .cbox b { margin-left: 3px; width: 11px; height: 16px; border-left: 1px solid #999; background: #e4e4e4; display: flex; align-items: center; justify-content: center; }
  .wid { margin-top: 20px; height: 18px; gap: 8px; padding-right: 4px; }
  .wid .spin { height: 18px; }
  .h2 { margin-top: 24px; }
  .srch { margin-top: 5px; height: 18px; gap: 9px; padding-right: 4px; }
  .sbox { width: 300px; height: 18px; background: #fff; border: 1px solid #d0d0d0; display: flex; align-items: center; gap: 6px; padding: 0 4px 0 9px; }
  .sbox em.g { flex: none; width: 1px; }
  .gallery { margin-top: 5px; height: 82px; border: 1px solid #828790; background: #fff; display: flex; padding: 5px 0 0 13px; }
  .cellg { width: 85px; height: 75px; display: flex; align-items: center; justify-content: center; }
  .cellg.first { justify-content: flex-start; }
  .cellg.pick { border: 1px solid #9cb8da; border-bottom: 0; background: linear-gradient(#edf5ff, #cfe2fc); }
  .cellg.wide { width: 128px; padding-right: 30px; }
  .pill { width: 71px; height: 15px; border-radius: 8px; border: 1px solid #111; background: #a97878; box-shadow: inset 4px 3px 7px #1a0a0a; }
  .neon { width: 63px; height: 6px; border-radius: 3px; background: #9c3a5c; box-shadow: 0 0 4px 4px #d49ab4; }
  .faint { width: 58px; height: 1px; background: #f0f0f0; }
  .sbar { margin: -5px 0 0 auto; width: 15px; background: #f0f0f0; display: flex; flex-direction: column; align-items: center; padding: 8px 0 6px; }
  .sbar i { width: 13px; height: 15px; border: 1px solid #999; background: linear-gradient(90deg, #fff, #d4d4d4); margin: 14px 0 auto; }
  .foot { margin-top: 6px; height: 18px; gap: 3px; }
  .foot > .t { margin-left: 7px; }
  .foot .sb { width: 21px; height: 18px; }
  .bt { display: flex; align-items: center; justify-content: center; gap: 6px; border: 1px solid #757575; border-radius: 3px; background: linear-gradient(#f4f4f4, #ececec 50%, #dedede 50%, #d0d0d0); }
  .symsel .bt { width: 66px; height: 19px; }
  .foot .bt + .bt { margin-left: 4px; }
  .acts { margin-top: 8px; height: 20px; justify-content: flex-end; gap: 8px; }
  .acts .ok { border: 2px solid #48a8cc; background: linear-gradient(#eef7fb, #cfe0ea); }

  .qgis { width: 497px; height: 507px; background: #f0f0f0; }
  .bar { display: flex; align-items: center; background: linear-gradient(90deg, #6f9bd4, #a5c2e4 8%, #8aacd8 16%, #2c5fae 24%, #123f8c 45%, #1a53ac 70%, #0b3f94); }
  .qgis .bar { height: 15px; gap: 3px; padding-top: 1px; }
  .qgis nav { height: 16px; display: flex; align-items: center; gap: 11.8px; padding: 2px 0 0 6.3px; border-bottom: 1px solid #c5c8d8; background: linear-gradient(#fcfcff, #e3e8f7 55%, #d8dff2); }
  .tb { display: flex; align-items: center; border-bottom: 1px solid #c2c2c2; background: #f1f1f1; }
  .qgis .tb { height: 26px; padding-left: 7.5px; }
  .qgis .tb .cell { width: 22.8px; }
  .cell { display: flex; align-items: center; justify-content: center; flex: none; }
  .cell.on { background: linear-gradient(#cfcfcf, #e8e8e8); border: 1px solid #888; border-radius: 2px; height: 22px; }
  .sep { width: 10px; height: 24px; flex: none; border-left: 1px solid #c0c0c0; background: repeating-linear-gradient(#b8b8b8 0 2px, transparent 2px 4px) 5px 0 / 2px 100% no-repeat; }
  .drop { display: flex; justify-content: center; flex: none; }
  .qgis .tb .drop { width: 9px; }
  .work { display: flex; }
  .qgis .panel { width: 155px; padding-right: 4px; }
  .qgis .ph { height: 13px; margin-top: 1px; display: flex; align-items: center; gap: 8px; padding: 0 5px 0 4.7px; background: #d6d6d6; }
  .qgis .pt { height: 21px; display: flex; align-items: center; padding: 1px 0 0 1px; }
  .qgis .pt .cell { width: 17.2px; }
  .qgis .pt .drop { width: 8px; }
  .layers { height: 390px; background: #fff; border: 1px solid #8a8a8a; }
  .lr { display: flex; align-items: center; gap: 3px; height: 15px; padding-left: 17px; }
  .lr.second { gap: 5px; }
  .pickrow { flex: 1; height: 14px; display: flex; align-items: center; padding-left: 7px; border: 1px dashed #222; background: #dcebfc; }
  .map { display: block; flex: none; }
  .ave { font-family: "Open Sans", sans-serif; fill: #0a0a0a; stroke: #0a0a0a; stroke-width: 1px; }

  .menus { width: 960px; height: 216px; margin-left: 59px; background: #f0f0f0; }
  .blue { height: 21px; background: linear-gradient(90deg, #3f70bb, #2358ac 35%, #063a90 65%, #1a4fa0 75%, #063f99); border-bottom: 2px solid #6c8cc0; }
  .menus nav { height: 33px; display: flex; align-items: center; gap: 25.7px; padding: 5px 0 0 23.5px; background: linear-gradient(#fff, #e4e9f8 50%, #dbe1f3); border-bottom: 1px solid #b9bccb; }
  .mi { display: flex; }
  .mi.hot { background: #cfcfd4; margin: 0 -8px 0 -9px; padding: 0 8px 0 9px; }
  .below { display: flex; height: 162px; }
  .edge { width: 11px; border-right: 1px solid #a0a0a0; }
  .edge i { height: 26px; margin-top: 8px; width: 8px; }
  .e1 { background: #5e8fc6; }
  .e2 { background: #8f6aa0; clip-path: polygon(100% 0, 100% 30%, 0 100%, 0 60%); }
  .e3 { background: #e0c040; border-radius: 4px; transform: scaleY(.5); }
  .dropm { position: relative; width: 462px; background: linear-gradient(90deg, #f0f0f0 45px, #dcdcdc 45px 46px, #f0f0f0 46px); padding-top: 5.5px; }
  .mr { display: flex; align-items: center; height: 34.4px; padding-top: 1px; }
  .mic { width: 54.5px; padding-left: 9px; flex: none; }
  .dropm .key { margin-left: 107px; }
  .cre { background: #e6ebf8; }
  .arr { margin-left: auto; padding: 0 11px 3px 0; }
  .rest { flex: 1; min-width: 0; overflow: hidden; }
  .stb { height: 34px; display: flex; align-items: flex-start; padding-left: 1px; overflow: hidden; }
  .stb .c2 { width: 48.3px; flex: none; display: flex; justify-content: center; padding-top: 9px; }
  .stb .sep { height: 34px; }
  .subm { width: 481px; height: 128px; position: relative; border: solid #999; border-width: 1px 2px 0 1px; background: linear-gradient(90deg, #f0f0f0 44px, #dcdcdc 44px 45px, #f0f0f0 45px); padding-top: 5px; }
  .subm .mic { padding-left: 6px; width: 53px; }
  .subm .key { margin-left: 87px; }
  .hov { background: linear-gradient(#f2f5fc, #e4eaf8); border: 1px solid #b4c4e4; border-width: 1px 1px 1px 0; margin-right: 5px; }
  .mark { position: absolute; border: 7px solid #e81c26; }
  .m1 { left: 6px; top: 20px; width: 73px; height: 40px; }
  .m2 { left: -4px; top: 37px; width: 466px; height: 39px; }
  .m3 { left: 0; top: 71px; width: 440px; height: 45px; }

  .dlg { width: 515px; height: 341px; margin: 5px 0 0 59px; background: linear-gradient(90deg, #4a3a28, #2a3242 50%, #4e5a3c); padding: 3px 4px 0 2px; }
  .glass2 { height: 340px; border: 1px solid #1c2e50; border-radius: 6px 6px 0 0; background: linear-gradient(#7ea4d8, #a9c4e6 60px, #cad8ea 195px, #2d5eaa 198px, #2a58a2); padding: 0 4px 0 5px; }
  .glass2 .title { height: 29px; display: flex; align-items: center; gap: 5px; padding-left: 3px; background: radial-gradient(ellipse at 18% 55%, #c9d8ee, #8fb0dc 28%, #4674b8 60%, #6a93cf 85%, #9ab6de); }
  .glass2 .title > .t { margin-top: -2px; }
  .glass2 .close { width: 49px; height: 19px; }
  .body { height: 312px; background: #f0f0f0; border: 1px solid #2c4468; padding: 17.5px 24px 0 17px; }
  .g { display: flex; align-items: center; }
  .red.sq { border: 4.5px solid #ec1c24; flex: none; }
  .db { height: 31px; gap: 1px; }
  .db .sq { height: 26px; width: 429px; display: flex; align-items: center; justify-content: space-between; padding-left: 2.5px; }
  .cb { display: flex; align-items: center; width: 334px; height: 17px; justify-content: space-between; padding: 0 4px 0 3px; border-left: 1px solid #777; background: linear-gradient(#f2f2f2, #ddd); }
  .db .dots { width: 30px; height: 31px; padding: 2px 3px; justify-content: stretch; }
  .dots b { flex: 1; height: 18px; border: 1px solid #999; background: #e4e4e4; font-size: 10px; line-height: 14px; text-align: center; font-weight: 400; }
  .lab { width: 89.5px; padding-left: 7px; flex: none; }
  .in { flex: 1; height: 20px; background: #fff; border: 1px solid #d6d9de; border-top-color: #abadb3; padding-left: 1px; display: flex; align-items: center; }
  .ln { margin-top: 3px; height: 20px; }
  .gt { margin-top: 7px; height: 22px; }
  .cmb { flex: 1; height: 22px; display: flex; align-items: center; gap: 3px; padding: 0 3px; border: 1px solid #757575; border-radius: 3px; background: linear-gradient(#f2f2f2, #ebebeb 50%, #dddddd 50%, #cfcfcf); }
  .ck { margin-top: 7px; height: 18px; padding-left: 90px; gap: 5px; }
  .box { width: 13px; height: 13px; border: 1px solid #8e8f8f; background: linear-gradient(135deg, #d4d8dc, #fff); flex: none; }
  .box.b2 { margin-left: 8px; }
  .ep { margin-top: 10px; height: 22px; padding-left: 89px; gap: 8px; }
  .gb { width: 27px; height: 23px; border: 1px solid #8a8a8a; border-radius: 3px; background: #e8e8e8; display: flex; align-items: center; justify-content: center; }
  .grp { margin: 15.5px 0 0 6.5px; height: 109px; border: 1px solid #d5dfe5; border-radius: 3px; padding: 0 12px 0 5px; }
  .grp.g2 { margin-top: 15px; height: 40px; }
  .cap { margin: -9px 0 0 2px; padding: 0 3px; width: 62px; background: #f0f0f0; }
  .lab2 { width: 42px; padding-left: 7px; flex: none; }
  .nm { margin-top: 11px; height: 20px; }
  .ty { margin-top: 7px; height: 22px; }
  .add { display: flex; justify-content: flex-end; margin-top: 8px; }
  .add .bt { width: 117px; height: 21px; gap: 3px; }
  .ann { position: absolute; left: 0; top: 0; }

  .dig { width: 616px; height: 244px; margin-left: 59px; background: #f0f0f0; }
  .dig .bar { height: 35px; gap: 6px; padding-top: 2px; border-bottom: 2px solid #6384b8; background: linear-gradient(90deg, #7ba2d6, #a9c4e6 12%, #a0bee4 25%, #2d62b4 36%, #1a50a8 65%, #063a8e); }
  .dig nav { height: 33px; display: flex; align-items: center; gap: 25.4px; padding: 3px 0 0 12px; overflow: hidden; border-bottom: 1px solid #c5c8d8; background: linear-gradient(#fdfdff, #e6eaf8 50%, #d9e0f2); }
  .dig .tb { height: 53px; padding-left: 14px; overflow: hidden; }
  .dig .tb .cell { width: 48.4px; }
  .dig .tb .sep { width: 17px; height: 45px; margin-left: 2px; }
  .dig .cell.on { height: 44px; border: 2px solid #888; border-radius: 4px; }
  .dig .tb.two .sep { width: 18px; margin-left: 2px; }
  .dig .tb .drop { width: 17px; }
  .dig .panel { width: 327px; padding-right: 7px; border-right: 1px solid #999; }
  .dig .ph { height: 29px; margin-top: 3px; display: flex; align-items: center; gap: 18px; padding: 2px 10px 0 7px; background: #d9d9d9; border: 1px solid #c4c4c4; }
  .dig .pt { height: 38px; display: flex; align-items: center; padding: 6px 0 0 2px; }
  .dig .pt .cell { width: 36px; }
  .dig .pt .drop { width: 18px; }
  .p1 { left: 319px; top: 118px; width: 60px; height: 59px; }
  .p2 { left: 419px; top: 120px; width: 59px; height: 60px; }
  .barrow { position: absolute; left: 431px; top: 167px; }
  .tip { position: absolute; left: 459px; top: 184px; width: 149px; height: 52px; padding: 2px 0 0 7px; border: 1px solid #767676; border-radius: 3px; background: linear-gradient(#fff, #e6e7f0); box-shadow: 2px 3px 3px #777; }
  .tip .t { fill: #555; }
  .tip > .t { margin-bottom: -1px; }
  .tl { display: flex; gap: 6px; }

  footer { margin: 30px 0 0 28px; display: flex; gap: 5px; }
  .left { width: 951px; padding-top: 9px; }
  .purple { height: 11px; background: #7030a0; }
  .names { display: flex; align-items: flex-end; gap: 72px; padding: 15px 0 0 5.5px; }
  .num { width: 57px; }
  .num i { height: 3px; background: #9bbb59; }
  .num .t { margin: 8px 0 0 2px; }
  .num b { height: 11px; margin-top: -6px; background: #9bbb59; }
</style>
